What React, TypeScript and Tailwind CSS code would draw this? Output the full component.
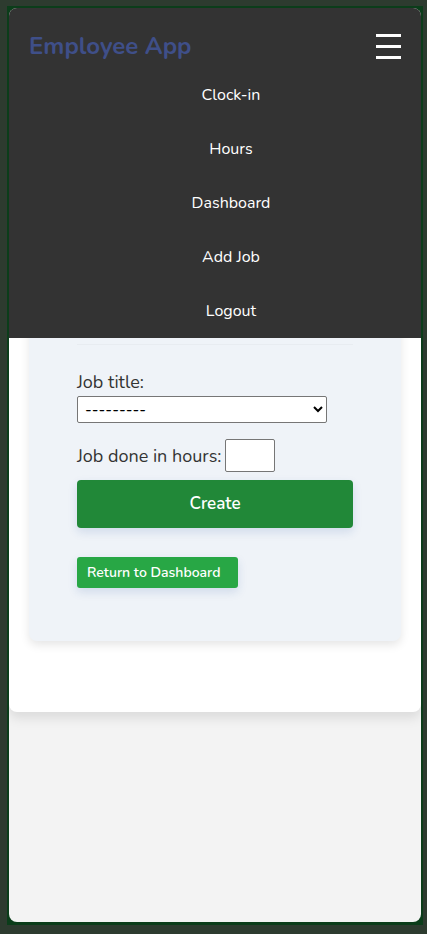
import React from "react";

export default function App() {
  const items = ["Clock-in", "Hours", "Dashboard", "Add Job", "Logout"];
  return (
    <div
      className="h-[934px] w-full bg-[#2d3b2f] pt-[6px] pl-[7px] pr-[4px] pb-[9px]"
      style={{ fontFamily: "Nunito, Lato, 'Open Sans', sans-serif" }}
    >
      <div className="h-full bg-[#0b3d1a] pt-[2px] px-[2px] pb-[3px]">
        <div className="h-full rounded-lg bg-[#f3f3f3] overflow-hidden flex flex-col">
          <nav className="bg-[#333333] relative z-10">
            <div className="h-[60px] pt-[16px] flex items-center justify-between pl-[20px] pr-[20px]">
              <span className="text-[24px] font-bold text-[#3f4f89] leading-none">Employee App</span>
              <div className="flex flex-col gap-[8px] w-[25px]">
                <div className="h-[3px] bg-white" />
                <div className="h-[3px] bg-white" />
                <div className="h-[3px] bg-white" />
              </div>
            </div>
            <ul className="pl-8">
              {items.map((it) => (
                <li key={it} className="h-[54px] flex items-center justify-center text-white text-[16px]">
                  {it}
                </li>
              ))}
            </ul>
          </nav>
          <div className="bg-white rounded-b-lg shadow-[0_6px_12px_rgba(0,0,0,0.1)] px-[20px] pb-[70px] h-[374px]">
            <div className="rounded-lg bg-[#eff3f8] shadow-[0_4px_10px_rgba(0,0,0,0.1)] px-[48px] pt-[6px] pb-[53px] -mt-[20px] relative">
              <div className="h-[20px]" />
              <div className="h-px bg-[#e8ecf1]" />
              <div className="mt-[24px] text-[18px] leading-[27px] text-[#333]">Job title:</div>
              <select className="block w-[250px] h-[27px] border border-[#767676] rounded-[2px] bg-white text-[16px] text-black pl-[3px]">
                <option>---------</option>
              </select>
              <div className="mt-[16px] flex items-end gap-[4px]">
                <span className="text-[18px] leading-[27px] text-[#333] mb-[2px]">Job done in hours:</span>
                <input className="w-[50px] h-[33px] border border-[#767676] rounded-[2px] bg-white" />
              </div>
              <button className="mt-[8px] w-[276px] h-[48px] rounded-[4px] bg-[#218838] text-white text-[17px] font-semibold shadow-[0_4px_10px_rgba(33,80,160,0.15)]">
                Create
              </button>
              <div className="mt-[29px]">
                <button className="w-[161px] h-[31px] rounded-[3px] bg-[#28a745] text-white text-[14px] font-semibold text-left pl-[10px] shadow-[0_4px_10px_rgba(33,80,160,0.15)]">
                  Return to Dashboard
                </button>
              </div>
            </div>
          </div>
          <div className="flex-1" />
        </div>
      </div>
    </div>
  );
}
